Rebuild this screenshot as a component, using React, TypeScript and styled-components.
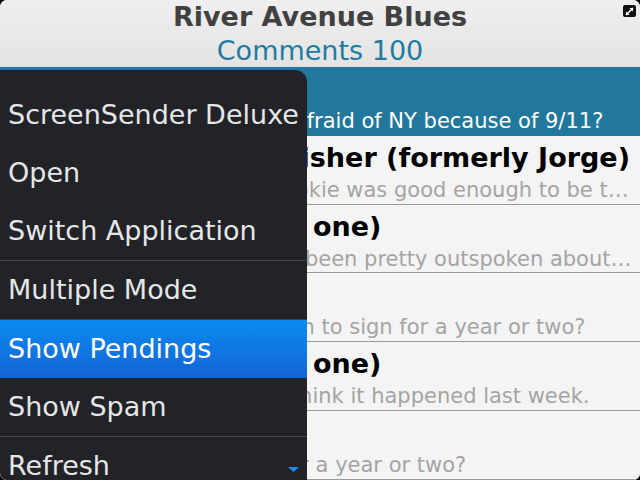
import React from "react";
import styled, { createGlobalStyle, css } from "styled-components";

const GlobalStyle = createGlobalStyle`
  html, body {
    margin: 0;
    padding: 0;
    background: #000;
  }
  body {
    font-family: "DejaVu Sans", "Noto Sans", sans-serif;
  }
`;

const Screen = styled.div`
  position: relative;
  width: 640px;
  height: 480px;
  overflow: hidden;
  border-radius: 7px;
  background: #f4f4f4;
  display: flex;
  flex-direction: column;
`;

const Header = styled.header`
  position: relative;
  height: 67px;
  box-sizing: border-box;
  padding-top: 2px;
  background: linear-gradient(#efefef, #e3e3e3);
  display: flex;
  flex-direction: column;
  align-items: center;
`;

const Title = styled.div`
  font-size: 27px;
  font-weight: bold;
  line-height: 30px;
  color: #414141;
`;

const Count = styled.div`
  margin-top: 3px;
  font-size: 27px;
  line-height: 32px;
  color: #1e7ba1;
`;

const ExpandBadge = styled.div`
  position: absolute;
  top: 5px;
  right: 4px;
  width: 13px;
  height: 12px;
  border-radius: 2px;
  background: #111;
  display: flex;
  align-items: center;
  justify-content: center;
`;

const List = styled.div`
  flex: 1;
  display: flex;
  flex-direction: column;
`;

const Row = styled.div<{ $selected?: boolean }>`
  flex: 1;
  min-height: 0;
  box-sizing: border-box;
  padding: 6px 8px 0;
  overflow: hidden;
  border-bottom: 1px solid #9a9a9a;
  background: #f4f4f4;
  ${(p) =>
    p.$selected &&
    css`
      background: #22779c;
      border-bottom-color: #22779c;
    `}
`;

const RowTitle = styled.div<{ $selected?: boolean }>`
  font-size: 27px;
  font-weight: bold;
  line-height: 32px;
  height: 32px;
  color: ${(p) => (p.$selected ? "#fff" : "#000")};
  white-space: nowrap;
  overflow: hidden;
  text-overflow: ellipsis;
`;

const RowText = styled.div<{ $selected?: boolean }>`
  margin-top: 3px;
  font-size: 21px;
  line-height: 26px;
  color: ${(p) => (p.$selected ? "#fff" : "#a4a4a4")};
  white-space: nowrap;
  overflow: hidden;
  text-overflow: ellipsis;
`;

const Menu = styled.nav`
  position: absolute;
  left: 0;
  top: 70px;
  bottom: 0;
  width: 307px;
  box-sizing: border-box;
  padding-top: 16px;
  background: #212328;
  border-top-right-radius: 12px;
  overflow: hidden;
`;

const MenuItem = styled.div<{ $active?: boolean }>`
  height: 58px;
  line-height: 58px;
  padding: 0 8px;
  font-size: 27px;
  color: #e6e6e6;
  white-space: nowrap;
  ${(p) =>
    p.$active &&
    css`
      color: #fff;
      background: linear-gradient(#0a8bf1, #1464d6);
    `}
`;

const MenuSeparator = styled.div`
  height: 1px;
  background: #3f4247;
`;

const MoreArrow = styled.div`
  position: absolute;
  right: 8px;
  bottom: 8px;
  width: 11px;
  height: 5px;
  display: flex;
`;

const rows = [
  {
    title: "Chris",
    text: "So you guys think Lee was afraid of NY because of 9/11?",
    selected: true,
  },
  {
    title: "Captain Delicious Fisher (formerly Jorge)",
    text: "Nobody else thought the rookie was good enough to be the fifth starter",
  },
  {
    title: "Mike (not the other one)",
    text: "Dude, Hal Steinbrenner has been pretty outspoken about the payroll",
  },
  {
    title: "Steve",
    text: "Would you really want Martin to sign for a year or two?",
  },
  {
    title: "Mike (not the other one)",
    text: "The way people talk you'd think it happened last week.",
  },
  {
    title: "Chris",
    text: "Why not bring Andy back for a year or two?",
  },
];

type MenuEntry = { label: string; active?: boolean; separatorAfter?: boolean };

const menu: MenuEntry[] = [
  { label: "ScreenSender Deluxe" },
  { label: "Open" },
  { label: "Switch Application", separatorAfter: true },
  { label: "Multiple Mode", separatorAfter: true },
  { label: "Show Pendings", active: true },
  { label: "Show Spam", separatorAfter: true },
  { label: "Refresh" },
];

export default function App() {
  return (
    <>
      <GlobalStyle />
      <Screen>
        <Header>
          <Title>River Avenue Blues</Title>
          <Count>Comments 100</Count>
          <ExpandBadge>
            <svg width="9" height="9" viewBox="0 0 9 9">
              <path d="M1 8 L8 1" stroke="#fff" strokeWidth="1.6" />
              <path d="M4.5 1 H8 V4.5 Z" fill="#fff" />
              <path d="M1 4.5 V8 H4.5 Z" fill="#fff" />
            </svg>
          </ExpandBadge>
        </Header>
        <List>
          {rows.map((r, i) => (
            <Row key={i} $selected={r.selected}>
              <RowTitle $selected={r.selected}>{r.title}</RowTitle>
              <RowText $selected={r.selected}>{r.text}</RowText>
            </Row>
          ))}
        </List>
        <Menu>
          {menu.map((m) => (
            <React.Fragment key={m.label}>
              <MenuItem $active={m.active}>{m.label}</MenuItem>
              {m.separatorAfter && <MenuSeparator />}
            </React.Fragment>
          ))}
          <MoreArrow>
            <svg width="11" height="5" viewBox="0 0 11 5">
              <path d="M0 0 H11 L5.5 5 Z" fill="#1f90ea" />
            </svg>
          </MoreArrow>
        </Menu>
      </Screen>
    </>
  );
}
